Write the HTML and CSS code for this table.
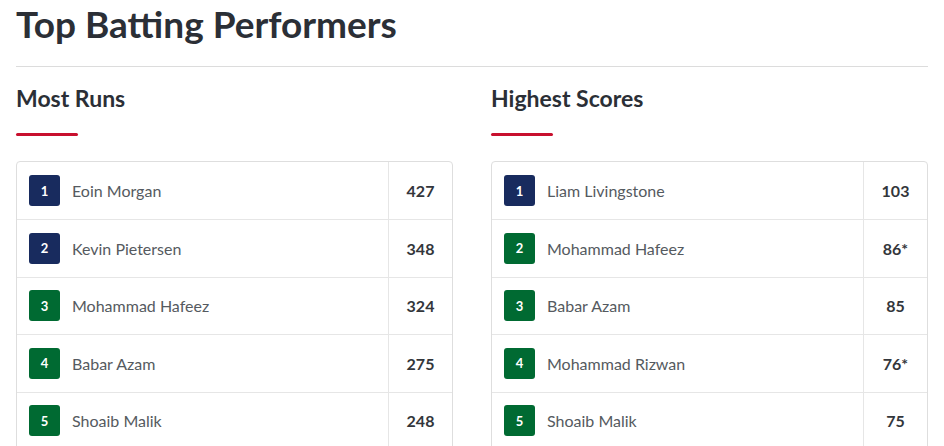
FILE: index.html
```html
<!DOCTYPE html>
<html lang="en">
<head>
<meta charset="utf-8">
<title>Top Batting Performers</title>
<link rel="stylesheet" href="styles.css">
</head>
<body>
<main class="page">
  <h1 class="title">Top Batting Performers</h1>
  <hr class="rule">
  <div class="columns">
    <section class="panel">
      <h2 class="panel-title">Most Runs</h2>
      <div class="accent"></div>
      <div class="table">
        <div class="row"><div class="player"><span class="badge navy">1</span><span class="name">Eoin Morgan</span></div><div class="score">427</div></div>
        <div class="row"><div class="player"><span class="badge navy">2</span><span class="name">Kevin Pietersen</span></div><div class="score">348</div></div>
        <div class="row"><div class="player"><span class="badge green">3</span><span class="name">Mohammad Hafeez</span></div><div class="score">324</div></div>
        <div class="row"><div class="player"><span class="badge green">4</span><span class="name">Babar Azam</span></div><div class="score">275</div></div>
        <div class="row"><div class="player"><span class="badge green">5</span><span class="name">Shoaib Malik</span></div><div class="score">248</div></div>
      </div>
    </section>
    <section class="panel">
      <h2 class="panel-title">Highest Scores</h2>
      <div class="accent"></div>
      <div class="table">
        <div class="row"><div class="player"><span class="badge navy">1</span><span class="name">Liam Livingstone</span></div><div class="score">103</div></div>
        <div class="row"><div class="player"><span class="badge green">2</span><span class="name">Mohammad Hafeez</span></div><div class="score">86*</div></div>
        <div class="row"><div class="player"><span class="badge green">3</span><span class="name">Babar Azam</span></div><div class="score">85</div></div>
        <div class="row"><div class="player"><span class="badge green">4</span><span class="name">Mohammad Rizwan</span></div><div class="score">76*</div></div>
        <div class="row"><div class="player"><span class="badge green">5</span><span class="name">Shoaib Malik</span></div><div class="score">75</div></div>
      </div>
    </section>
  </div>
</main>
</body>
</html>
```
FILE: styles.css
```css
* { box-sizing: border-box; }
body {
  margin: 0;
  background: #fff;
  font-family: Lato, "Noto Sans", sans-serif;
  color: #2b2f36;
}
.page {
  padding: 0 16px;
}
.title {
  margin: 0;
  padding-top: 3px;
  font-size: 37px;
  line-height: 42px;
  font-weight: 700;
  color: #2b2f36;
}
.rule {
  margin: 21px 0 0;
  border: 0;
  border-top: 1px solid #dcdcdc;
  height: 0;
}
.columns {
  display: grid;
  grid-template-columns: 1fr 1fr;
  column-gap: 38px;
}
.panel-title {
  margin: 17px 0 0;
  font-size: 23px;
  line-height: 28px;
  font-weight: 700;
  color: #2b2f36;
}
.accent {
  margin-top: 21px;
  width: 62px;
  height: 3px;
  border-radius: 2px;
  background: #c8102e;
}
.table {
  margin-top: 25px;
  border: 1px solid #dedede;
  border-radius: 4px;
}
.row {
  display: grid;
  grid-template-columns: 1fr 63px;
  height: 57.5px;
  border-top: 1px solid #e6e6e6;
}
.row:first-child { border-top: 0; height: 57px; }
.player {
  display: flex;
  align-items: center;
  padding-left: 12px;
  gap: 12px;
  border-right: 1px solid #e6e6e6;
}
.badge {
  width: 31px;
  height: 31px;
  border-radius: 3px;
  display: flex;
  align-items: center;
  justify-content: center;
  color: #fff;
  font-size: 13px;
  font-weight: 700;
}
.navy { background: #182b5e; }
.green { background: #006a32; }
.name {
  font-size: 16px;
  color: #555a60;
}
.score {
  display: flex;
  align-items: center;
  justify-content: center;
  font-size: 16px;
  font-weight: 700;
  color: #33363b;
}
```
